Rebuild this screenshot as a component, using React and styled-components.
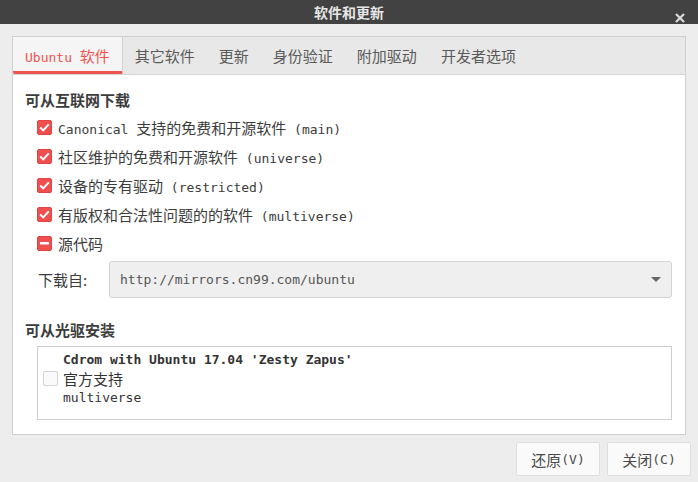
import React from 'react'
import styled, { createGlobalStyle } from 'styled-components'

const GlobalStyle = createGlobalStyle`
  html, body {
    margin: 0;
    padding: 0;
    background: #ededed;
  }
  body {
    font-family: "Noto Sans CJK SC", "DejaVu Sans", sans-serif;
    color: #3c3c3c;
  }
`

const Window = styled.div`
  width: 698px;
  height: 482px;
  background: #ededed;
  display: flex;
  flex-direction: column;
  overflow: hidden;
`

const TitleBar = styled.div`
  height: 24px;
  flex: none;
  background: #424242;
  color: #e6e6e6;
  font-size: 14px;
  font-weight: bold;
  display: flex;
  align-items: center;
  justify-content: center;
  position: relative;
`

const CloseButton = styled.div`
  position: absolute;
  right: 13px;
  top: 7px;
  width: 10px;
  height: 10px;
`

const Body = styled.div`
  padding: 12px 12px 0 12px;
  display: flex;
  flex-direction: column;
`

const Notebook = styled.div`
  border: 1px solid #cfcfcf;
  background: #ffffff;
  height: 399px;
  box-sizing: border-box;
  display: flex;
  flex-direction: column;
`

const TabBar = styled.div`
  height: 37px;
  flex: none;
  display: flex;
  background: #e8e8e8;
  border-bottom: 1px solid #d6d6d6;
`

const Tab = styled.div`
  padding: 0 12px;
  height: 100%;
  box-sizing: border-box;
  display: flex;
  align-items: center;
  font-size: 15px;
  color: ${p => (p.active ? '#ef5350' : '#5a5a5a')};
  background: ${p => (p.active ? '#f5f5f5' : 'transparent')};
  border-right: ${p => (p.active ? '1px solid #d2d2d2' : 'none')};
  border-bottom: ${p => (p.active ? '3px solid #ef5350' : 'none')};
  border-radius: ${p => (p.active ? '0 0 2px 2px' : '0')};
  padding-top: ${p => (p.active ? '3px' : '0')};
`

const Mono = styled.span`
  font-family: "DejaVu Sans Mono", "Noto Sans CJK SC", monospace;
  font-size: 13px;
  font-weight: ${p => (p.bold ? 'bold' : 'normal')};
  white-space: pre;
`

const Page = styled.div`
  flex: 1;
  padding: 15px 13px 0 12px;
  display: flex;
  flex-direction: column;
`

const SectionTitle = styled.div`
  font-size: 15px;
  font-weight: bold;
  color: #3c3c3c;
  line-height: 20px;
  margin-top: ${p => p.gap || 0}px;
`

const CheckList = styled.div`
  margin-top: 3px;
  padding-left: 12px;
  display: flex;
  flex-direction: column;
`

const CheckRow = styled.div`
  height: 29px;
  display: flex;
  align-items: center;
  gap: 6px;
  font-size: 15px;
  color: #3c3c3c;
`

const Box = styled.div`
  width: 15px;
  height: 15px;
  flex: none;
  border-radius: 2px;
  box-sizing: border-box;
  background: ${p => (p.on ? '#ef4f4f' : '#fafafa')};
  border: 1px solid ${p => (p.on ? '#e04444' : '#d4d4d4')};
  display: flex;
  align-items: center;
  justify-content: center;
`

const SourceRow = styled.div`
  display: flex;
  align-items: center;
  margin-top: 3px;
  padding-left: 13px;
`

const SourceLabel = styled.div`
  width: 71px;
  font-size: 15px;
  color: #3c3c3c;
`

const Combo = styled.div`
  flex: 1;
  height: 37px;
  box-sizing: border-box;
  background: #efefef;
  border: 1px solid #d3d3d3;
  border-radius: 3px;
  display: flex;
  align-items: center;
  justify-content: space-between;
  padding: 0 10px 0 10px;
  color: #555;
`

const Arrow = styled.div`
  width: 0;
  height: 0;
  border-left: 5px solid transparent;
  border-right: 5px solid transparent;
  border-top: 5px solid #666;
`

const ListBox = styled.div`
  margin: 6px 0 0 12px;
  height: 74px;
  box-sizing: border-box;
  border: 1px solid #cfcfcf;
  background: #fff;
  display: flex;
  align-items: flex-start;
  padding: 3px 0 0 5px;
  gap: 5px;
`

const ListCheck = styled(Box)`
  margin-top: 21px;
`

const ListText = styled.div`
  display: flex;
  flex-direction: column;
  color: #333;
`

const Line = styled.div`
  height: ${p => p.h}px;
  display: flex;
  align-items: center;
  font-size: 15px;
`

const Footer = styled.div`
  display: flex;
  justify-content: flex-end;
  gap: 7px;
  padding: 7px 7px 0 0;
`

const Button = styled.div`
  width: ${p => p.w}px;
  height: 34px;
  box-sizing: border-box;
  background: #fafafa;
  border: 1px solid #dedede;
  border-radius: 2px;
  display: flex;
  align-items: center;
  justify-content: center;
  font-size: 15px;
  color: #4a4a4a;
`

const Check = () => (
  <svg width="11" height="9" viewBox="0 0 11 9">
    <path d="M1.2 4.6 L4.2 7.4 L9.8 1.4" fill="none" stroke="#fff" strokeWidth="2" />
  </svg>
)

const Dash = () => (
  <svg width="9" height="3" viewBox="0 0 9 3">
    <rect x="0" y="0" width="9" height="2.5" fill="#fff" />
  </svg>
)

const sources = [
  { zh: 'Canonical 支持的免费和开源软件', tag: 'main', leadMono: true },
  { zh: '社区维护的免费和开源软件', tag: 'universe' },
  { zh: '设备的专有驱动', tag: 'restricted' },
  { zh: '有版权和合法性问题的的软件', tag: 'multiverse' },
]

const tabs = ['其它软件', '更新', '身份验证', '附加驱动', '开发者选项']

export default function App() {
  return (
    <Window>
      <GlobalStyle />
      <TitleBar>
        软件和更新
        <CloseButton>
          <svg width="10" height="10" viewBox="0 0 10 10">
            <path d="M1 1 L9 9 M9 1 L1 9" stroke="#dcdcdc" strokeWidth="2.2" />
          </svg>
        </CloseButton>
      </TitleBar>
      <Body>
        <Notebook>
          <TabBar>
            <Tab active>
              <span>
                <Mono>Ubuntu </Mono>软件
              </span>
            </Tab>
            {tabs.map(t => (
              <Tab key={t}>{t}</Tab>
            ))}
          </TabBar>
          <Page>
            <SectionTitle>可从互联网下载</SectionTitle>
            <CheckList>
              {sources.map(s => (
                <CheckRow key={s.tag}>
                  <Box on>
                    <Check />
                  </Box>
                  <span>
                    {s.leadMono ? (
                      <>
                        <Mono>Canonical </Mono>支持的免费和开源软件
                      </>
                    ) : (
                      s.zh
                    )}
                    <Mono> ({s.tag})</Mono>
                  </span>
                </CheckRow>
              ))}
              <CheckRow>
                <Box on>
                  <Dash />
                </Box>
                <span>源代码</span>
              </CheckRow>
            </CheckList>
            <SourceRow>
              <SourceLabel>下载自:</SourceLabel>
              <Combo>
                <Mono>http://mirrors.cn99.com/ubuntu</Mono>
                <Arrow />
              </Combo>
            </SourceRow>
            <SectionTitle gap={22}>可从光驱安装</SectionTitle>
            <ListBox>
              <ListCheck />
              <ListText>
                <Line h={18}>
                  <Mono bold>Cdrom with Ubuntu 17.04 'Zesty Zapus'</Mono>
                </Line>
                <Line h={21}>官方支持</Line>
                <Line h={16}>
                  <Mono>multiverse</Mono>
                </Line>
              </ListText>
            </ListBox>
          </Page>
        </Notebook>
      </Body>
      <Footer>
        <Button w={84}>
          还原<Mono>(V)</Mono>
        </Button>
        <Button w={84}>
          关闭<Mono>(C)</Mono>
        </Button>
      </Footer>
    </Window>
  )
}
